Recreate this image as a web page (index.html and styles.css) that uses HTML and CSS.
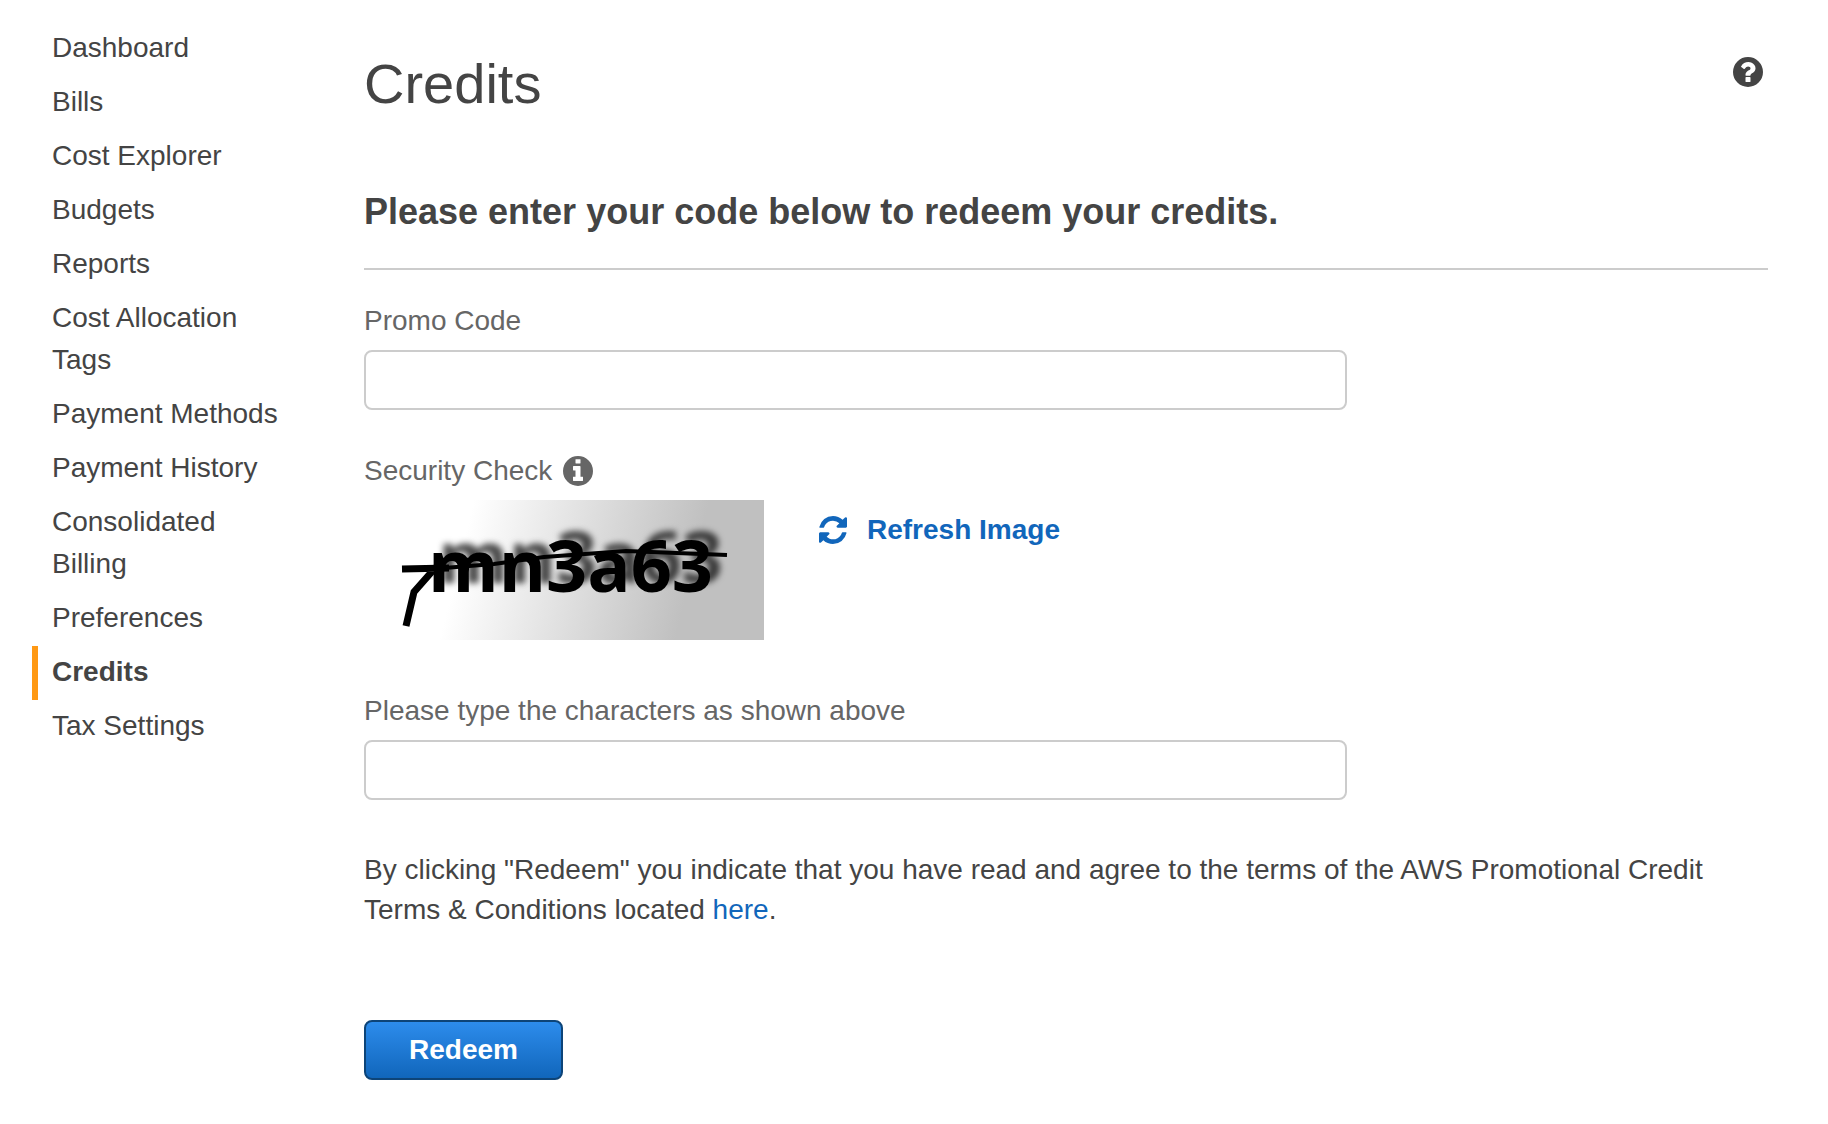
FILE: index.html
```html
<!DOCTYPE html>
<html lang="en">
<head>
<meta charset="utf-8">
<title>Credits</title>
<link rel="stylesheet" href="styles.css">
</head>
<body>
<div class="layout">
  <nav class="sidebar">
    <a class="nav-link" href="#">Dashboard</a>
    <a class="nav-link" href="#">Bills</a>
    <a class="nav-link" href="#">Cost Explorer</a>
    <a class="nav-link" href="#">Budgets</a>
    <a class="nav-link" href="#">Reports</a>
    <a class="nav-link" href="#">Cost Allocation Tags</a>
    <a class="nav-link" href="#">Payment Methods</a>
    <a class="nav-link" href="#">Payment History</a>
    <a class="nav-link" href="#">Consolidated Billing</a>
    <a class="nav-link" href="#">Preferences</a>
    <a class="nav-link nav-link-active" href="#" aria-current="page">Credits</a>
    <a class="nav-link" href="#">Tax Settings</a>
  </nav>
  <main class="content">
    <header class="page-header">
      <h1 class="page-title">Credits</h1>
      <button class="icon-button" type="button" aria-label="Help">
        <svg class="icon" viewBox="0 0 1536 1536" aria-hidden="true"><path fill="currentColor" fill-rule="evenodd" d="M768 0a768 768 0 1 1 0 1536a768 768 0 1 1 0-1536zM896 1248v-192q0-14-9-23t-23-9H672q-14 0-23 9t-9 23v192q0 14 9 23t23 9h192q14 0 23-9t9-23zM1152 576q0-88-55.500-163T958 297t-170-41q-243 0-371 213q-15 24 8 42l132 100q7 6 19 6q16 0 25-12q53-68 86-92q34-24 86-24q48 0 85.500 26t37.500 59q0 38-20 61t-68 45q-63 28-115.500 86.500T640 892v36q0 14 9 23t23 9h192q14 0 23-9t9-23q0-19 21.500-49.500T972 829q32-18 49-28.500t46-35t44.500-48t28-60.500t12.500-81z"/></svg>
      </button>
    </header>
    <h2 class="section-title">Please enter your code below to redeem your credits.</h2>
    <form class="redeem-form">
      <label class="label" for="promo">Promo Code</label>
      <input class="field" id="promo" type="text">
      <div class="label security-label">
        <span>Security Check</span>
        <svg class="icon" viewBox="0 0 1536 1536" aria-hidden="true"><path fill="currentColor" fill-rule="evenodd" d="M768 0a768 768 0 1 1 0 1536a768 768 0 1 1 0-1536zM1024 1248v-160q0-14-9-23t-23-9h-96V544q0-14-9-23t-23-9H544q-14 0-23 9t-9 23v160q0 14 9 23t23 9h96v320h-96q-14 0-23 9t-9 23v160q0 14 9 23t23 9h448q14 0 23-9t9-23zM896 352V192q0-14-9-23t-23-9H672q-14 0-23 9t-9 23v160q0 14 9 23t23 9h192q14 0 23-9t9-23z"/></svg>
      </div>
      <div class="captcha-row">
        <svg class="captcha" viewBox="0 0 400 140">
          <defs>
            <linearGradient id="fade" gradientUnits="userSpaceOnUse" x1="110" y1="0" x2="332" y2="55">
              <stop offset="0" stop-color="#fff"/>
              <stop offset="1" stop-color="#c0c0c0"/>
            </linearGradient>
            <filter id="shadow" x="-20%" y="-40%" width="140%" height="180%"><feDropShadow dx="10" dy="-9" stdDeviation="3" flood-color="#000" flood-opacity=".7"/></filter>
          </defs>
          <rect width="400" height="140" fill="url(#fade)"/>
          <text class="captcha-text" x="64" y="92" filter="url(#shadow)">mn3a63</text>
          <path fill="none" stroke="#000" stroke-width="7" d="M38 69l47-1M42 126l8-34l22-25"/>
          <path fill="none" stroke="#000" stroke-width="4" d="M80 68l50-4l50-7l82-6l101 4"/>
        </svg>
        <a class="refresh" href="#">
          <svg class="icon refresh-icon" viewBox="0 0 1536 1536" aria-hidden="true"><path fill="currentColor" d="M1511 928q0 5-1 7q-64 268-268 434.500T764 1536q-146 0-282.500-55T238 1324l-129 129q-19 19-45 19t-45-19t-19-45V960q0-26 19-45t45-19h448q26 0 45 19t19 45t-19 45l-137 137q71 66 161 102t187 36q134 0 250-65t186-179q11-17 53-117q8-23 30-23h192q13 0 22.500 9.500t9.500 22.500zM1536 128v448q0 26-19 45t-45 19h-448q-26 0-45-19t-19-45t19-45l138-138Q969 256 768 256q-134 0-250 65T332 500q-11 17-53 117q-8 23-30 23H50q-13 0-22.500-9.500T18 608v-7q65-268 270-434.500T768 0q146 0 284 55.500T1297 212l130-129q19-19 45-19t45 19t19 45z"/></svg>
          <span>Refresh Image</span>
        </a>
      </div>
      <label class="label" for="characters">Please type the characters as shown above</label>
      <input class="field" id="characters" type="text">
      <p class="terms">By clicking "Redeem" you indicate that you have read and agree to the terms of the AWS Promotional Credit Terms &amp; Conditions located <a class="link" href="#">here</a>.</p>
      <button class="redeem" type="submit">Redeem</button>
    </form>
  </main>
</div>
</body>
</html>
```
FILE: styles.css
```css
* {
  box-sizing: border-box;
}

body {
  margin: 0;
  background: #fff;
  color: #444;
  font-family: "Liberation Sans", Arial, sans-serif;
  font-size: 28px;
  line-height: 40px;
}

.layout {
  display: flex;
  padding: 0 60px 44px 32px;
}

.sidebar {
  display: flex;
  flex-direction: column;
  flex: none;
  width: 256px;
  margin-right: 76px;
  padding-top: 22px;
}

.nav-link {
  padding: 5px 0 7px 14px;
  border-left: 6px solid transparent;
  color: #444;
  line-height: 42px;
  text-decoration: none;
}

.nav-link-active {
  border-left-color: #ff9914;
  font-weight: bold;
}

.content {
  flex: 1;
  min-width: 0;
}

.page-header {
  display: flex;
  justify-content: space-between;
  align-items: flex-start;
  padding: 57px 5px 0 0;
}

.page-title {
  margin: 0;
  font-size: 56px;
  font-weight: normal;
  line-height: 54px;
}

.icon {
  display: block;
  flex: none;
  width: 30px;
  height: 30px;
}

.icon-button {
  padding: 0;
  border: 0;
  background: none;
  color: #444;
}

.section-title {
  margin: 77px 0 0;
  padding-bottom: 32px;
  border-bottom: 2px solid #ccc;
  font-size: 36px;
  line-height: 48px;
}

.redeem-form {
  padding-top: 30px;
}

.label {
  display: block;
  margin-bottom: 8px;
  color: #666;
  line-height: 42px;
}

.field {
  display: block;
  width: 70%;
  height: 60px;
  margin: 0 0 40px;
  padding: 0 16px;
  border: 2px solid #ccc;
  border-radius: 8px;
  background: #fff;
  color: #444;
  font: inherit;
}

.security-label {
  display: flex;
  align-items: center;
  gap: 11px;
}

.captcha-row {
  display: flex;
  align-items: flex-start;
  gap: 55px;
  margin-bottom: 50px;
}

.captcha {
  display: block;
  width: 400px;
  height: 140px;
}

.captcha-text {
  font-family: "Open Sans", sans-serif;
  font-size: 72px;
  font-weight: bold;
}

.refresh {
  display: flex;
  align-items: center;
  gap: 20px;
  padding-top: 10px;
  color: #1166bb;
  font-weight: bold;
  text-decoration: none;
}

.refresh-icon {
  width: 28px;
  height: 28px;
}

.terms {
  margin: 50px 0 90px;
}

.link {
  color: #1166bb;
  text-decoration: none;
}

.redeem {
  display: block;
  height: 60px;
  padding: 0 43px;
  border: 2px solid #0d4478;
  border-radius: 8px;
  background: linear-gradient(#2d8cec, #1166bb);
  color: #fff;
  font: inherit;
  font-weight: bold;
}
```
